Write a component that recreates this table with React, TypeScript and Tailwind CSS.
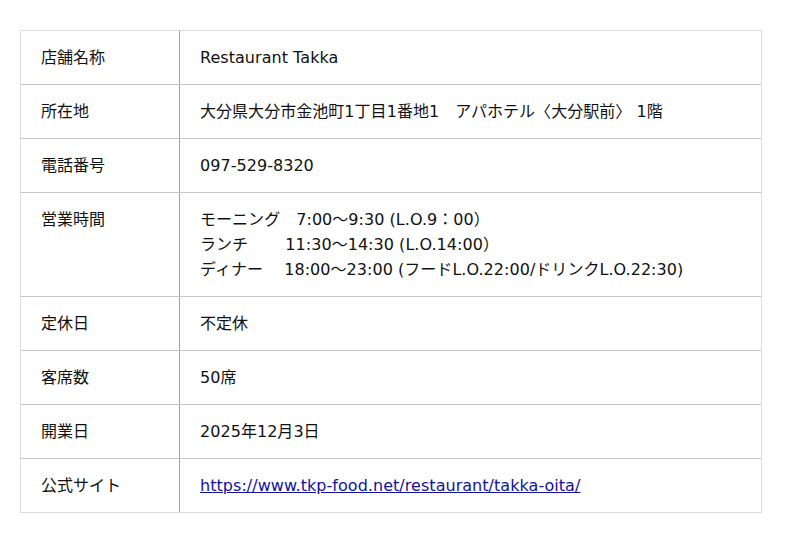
import React from "react";

const rows: { label: string; value: React.ReactNode }[] = [
  { label: "店舗名称", value: "Restaurant Takka" },
  { label: "所在地", value: "大分県大分市金池町1丁目1番地1　アパホテル〈大分駅前〉 1階" },
  { label: "電話番号", value: "097-529-8320" },
  {
    label: "営業時間",
    value: (
      <>
        <div>モーニング　7:00〜9:30 (L.O.9：00）</div>
        <div>ランチ　　 11:30〜14:30 (L.O.14:00）</div>
        <div>ディナー　 18:00〜23:00 (フードL.O.22:00/ドリンクL.O.22:30)</div>
      </>
    ),
  },
  { label: "定休日", value: "不定休" },
  { label: "客席数", value: "50席" },
  { label: "開業日", value: "2025年12月3日" },
  {
    label: "公式サイト",
    value: (
      <a href="#" className="text-[#12129e] underline">
        https://www.tkp-food.net/restaurant/takka-oita/
      </a>
    ),
  },
];

export default function App() {
  return (
    <div
      className="w-[800px] h-[543px] bg-white pt-[30px] pl-[20px] text-[16px] text-[#111]"
      style={{ fontFamily: '"DejaVu Sans", "Noto Sans CJK JP", sans-serif' }}
    >
      <div className="w-[742px] border border-[#dcdcdc]">
        {rows.map((r, i) => (
          <div
            key={i}
            className={`flex ${i > 0 ? "border-t border-[#c4c4c4]" : ""}`}
          >
            <div className="w-[159px] shrink-0 border-r border-[#a0a0a0] px-[20px] py-[14px] leading-[25px]">
              {r.label}
            </div>
            <div className="flex-1 px-[20px] py-[14px] leading-[25px] whitespace-pre tracking-[0.04px]">
              {r.value}
            </div>
          </div>
        ))}
      </div>
    </div>
  );
}
